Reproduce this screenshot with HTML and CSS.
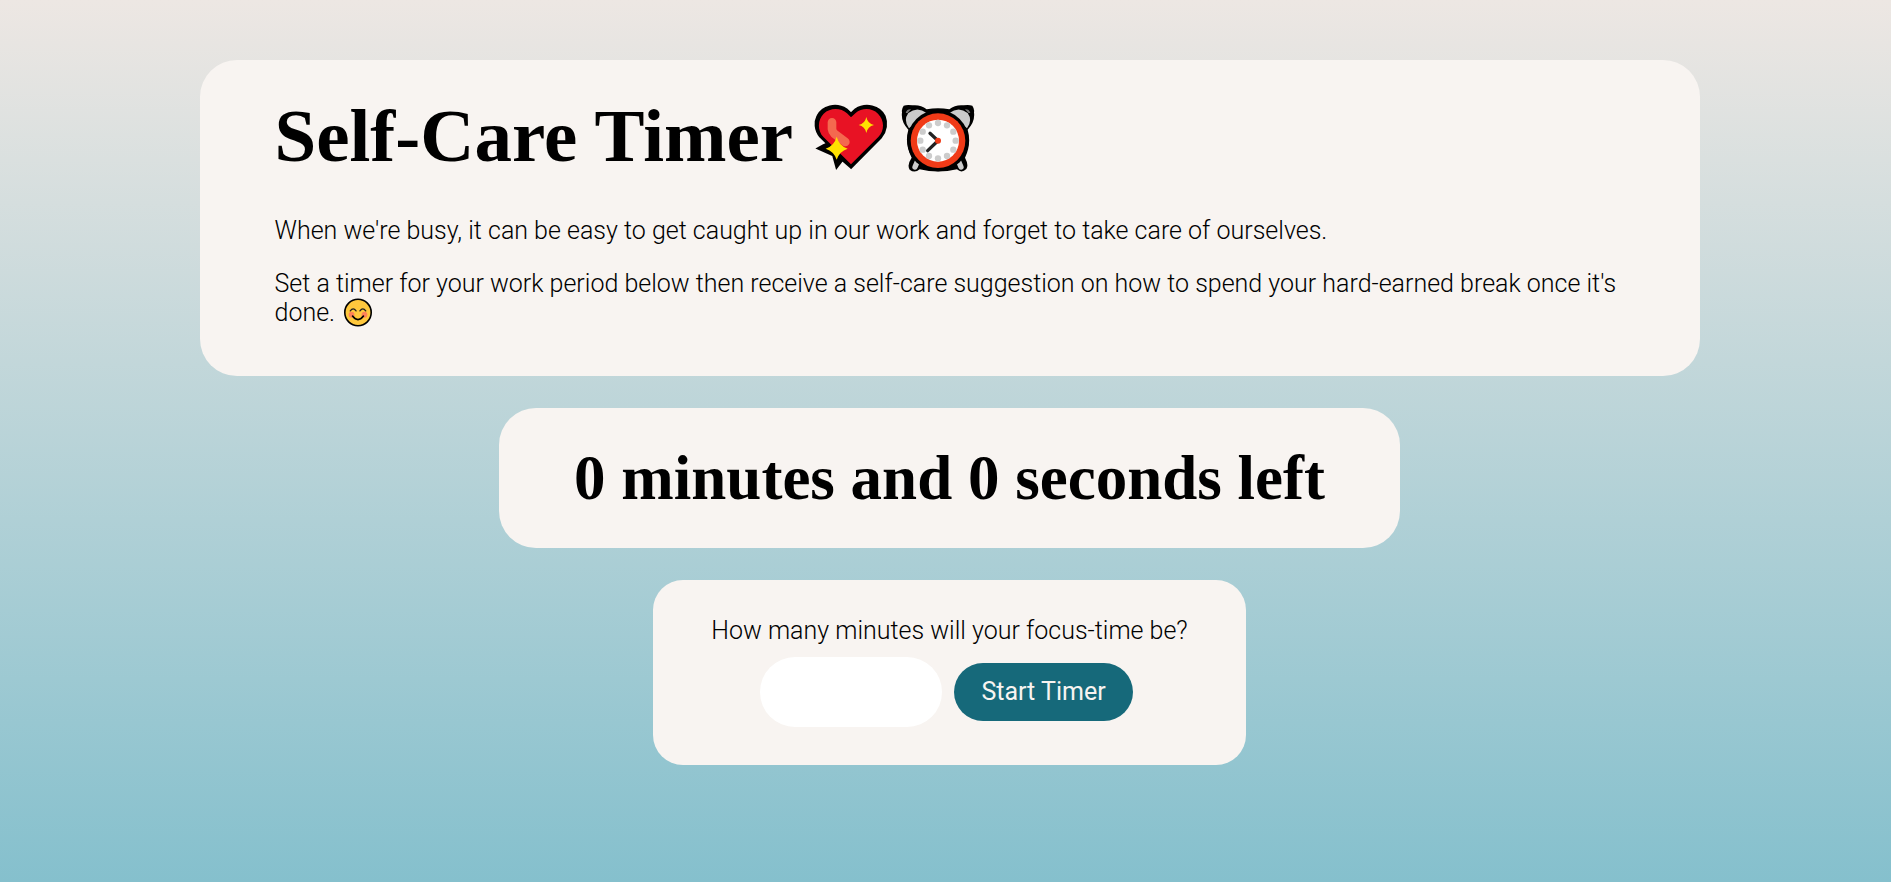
FILE: index.html
```html
<!DOCTYPE html>
<html lang="en">
<head>
<meta charset="utf-8">
<title>Self-Care Timer</title>
<link rel="stylesheet" href="styles.css">
</head>
<body>
<main class="page">
  <header class="card intro">
    <h1 class="title">
      <span>Self-Care Timer</span>
      <span class="icons">
        <svg class="icon" viewBox="40 36 228 210" role="img" aria-label="Sparkling heart">
          <path d="M154 229 L128 206 L111 228 L101 192 L56 172 L72 163 L84 158 L62 136 C46 116 46 92 54 76 C68 46 110 36 140 56 L154 69 L168 56 C198 36 240 46 254 76 C262 96 259 120 244 138 Z" fill="#000" stroke="#000" stroke-width="8"/>
          <path d="M154 220 L72 139 C52 118 54 86 72 68 C92 49 124 50 142 67 L154 79 L167 67 C187 50 216 50 235 68 C255 88 255 119 236 138 Z" fill="#e81224"/>
          <path d="M97 94 V114 Q98 122 104 128 L137 153" fill="none" stroke="#f4694f" stroke-width="26" stroke-linecap="round"/>
          <path d="M111 137 Q118 164 144 173 Q119 181 111 206 Q103 181 78 173 Q104 164 111 137Z M200 78 Q204 98 223 102 Q204 106 200 126 Q196 106 177 102 Q196 98 200 78Z" fill="#ffe100"/>
        </svg>
        <svg class="icon" viewBox="301 36 228 210" role="img" aria-label="Alarm clock">
          <path d="M312 44 Q323 40 338 43 Q362 40 381 55 Q415 48 449 55 Q468 40 492 43 Q507 40 518 44 Q525 54 523 64 Q527 92 504 116 Q516 158 496 200 Q508 222 500 234 Q486 248 472 235 Q415 248 360 235 Q345 248 330 236 Q321 222 336 200 Q314 158 326 116 Q303 92 307 64 Q305 54 312 44Z" fill="#000"/>
          <path d="M318 65 Q322 54 334 55 L323 67Z M512 65 Q508 54 496 55 L507 67Z" fill="#777"/>
          <path d="M328 112 Q310 88 326 66 Q353 45 381 66Z M502 112 Q520 88 504 66 Q477 45 449 66Z" fill="#ccc"/>
          <path d="M354 209 L346 228 M476 209 L484 228" stroke="#ccc" stroke-width="16" stroke-linecap="round"/>
          <circle cx="415" cy="149" r="92" fill="#000"/>
          <circle cx="415" cy="149" r="82" fill="#f03a17"/>
          <circle cx="415" cy="149" r="63" fill="#fff"/>
          <g fill="#ccc"><circle cx="415" cy="96" r="9.5"/><circle cx="442" cy="103" r="9.5"/><circle cx="461" cy="122" r="9.5"/><circle cx="468" cy="149" r="9.5"/><circle cx="461" cy="176" r="9.5"/><circle cx="442" cy="195" r="9.5"/><circle cx="415" cy="202" r="9.5"/><circle cx="388" cy="195" r="9.5"/><circle cx="369" cy="176" r="9.5"/><circle cx="362" cy="149" r="9.5"/><circle cx="369" cy="122" r="9.5"/><circle cx="388" cy="103" r="9.5"/></g>
          <path d="M391 127 L415 149 L384 179" fill="none" stroke="#222" stroke-width="10" stroke-linecap="round"/>
          <circle cx="415" cy="149" r="9" fill="#f03a17"/>
        </svg>
      </span>
    </h1>
    <p class="text">When we're busy, it can be easy to get caught up in our work and forget to take care of ourselves.</p>
    <p class="text">Set a timer for your work period below then receive a self-care suggestion on how to spend your hard-earned break once it's done. <svg class="smiley" viewBox="0 0 90 90" role="img" aria-label="Smiling face"><circle cx="45" cy="45" r="41" fill="#ffc83d" stroke="#000" stroke-width="5"/><circle cx="25" cy="52" r="9" fill="#ff8257"/><circle cx="65" cy="52" r="9" fill="#ff8257"/><path d="M21 40 Q30 27 39 40 M51 40 Q60 27 69 40" fill="none" stroke="#222" stroke-width="4" stroke-linecap="round"/><path d="M28 56 Q45 78 62 56" fill="none" stroke="#000" stroke-width="5" stroke-linecap="round"/></svg></p>
  </header>

  <section class="card countdown">
    <h2 class="remaining">0 minutes and 0 seconds left</h2>
  </section>

  <form class="card setup">
    <label class="text" for="minutes">How many minutes will your focus-time be?</label>
    <div class="controls">
      <input class="minutes" id="minutes" type="text" inputmode="numeric">
      <button class="start" type="button">Start Timer</button>
    </div>
  </form>
</main>
</body>
</html>
```

FILE: styles.css
```css
* {
  box-sizing: border-box;
}

body {
  min-height: 100vh;
  margin: 0;
  background: linear-gradient(#ede7e3, #85c0cd);
  color: #000;
  font-family: Roboto, sans-serif;
  font-size: 25px;
  font-weight: 300;
  line-height: 29px;
}

.page {
  display: flex;
  flex-direction: column;
  align-items: center;
  gap: 32px;
  padding: 60px 0 60px 8px;
}

.card {
  max-width: 1500px;
  border-radius: 37px;
  background: #f8f4f1;
}

.intro {
  display: flex;
  flex-direction: column;
  gap: 24px;
  padding: 36px 75px 49px;
}

.title,
.remaining {
  margin: 0;
  font-family: "Liberation Serif", serif;
  font-weight: 700;
}

.title {
  display: flex;
  flex-wrap: wrap;
  align-items: center;
  gap: 20px;
  margin-bottom: 16px;
  font-size: 75px;
  line-height: 80px;
}

.icons {
  display: flex;
  gap: 11px;
  padding-top: 3px;
}

.icon {
  width: 76px;
  height: 70px;
}

.text {
  margin: 0;
}

.smiley {
  width: 30px;
  height: 29px;
  margin-left: 2px;
  vertical-align: bottom;
}

.countdown {
  padding: 38px 75px;
}

.remaining {
  font-size: 63px;
  line-height: 64px;
  text-align: center;
}

.setup {
  display: flex;
  flex-direction: column;
  align-items: center;
  gap: 12px;
  padding: 36px 58px 38px;
  border-radius: 30px;
}

.controls {
  display: flex;
  align-items: center;
  gap: 12px;
  margin-right: 6px;
}

.minutes {
  width: 182px;
  height: 70px;
  padding: 0 28px;
  border: 0;
  border-radius: 35px;
  background: #fff;
  font: inherit;
}

.start {
  padding: 14px 27px 15px;
  border: 0;
  border-radius: 29px;
  background: #16697a;
  color: #f8f4f1;
  font: inherit;
  font-weight: 400;
}
```
